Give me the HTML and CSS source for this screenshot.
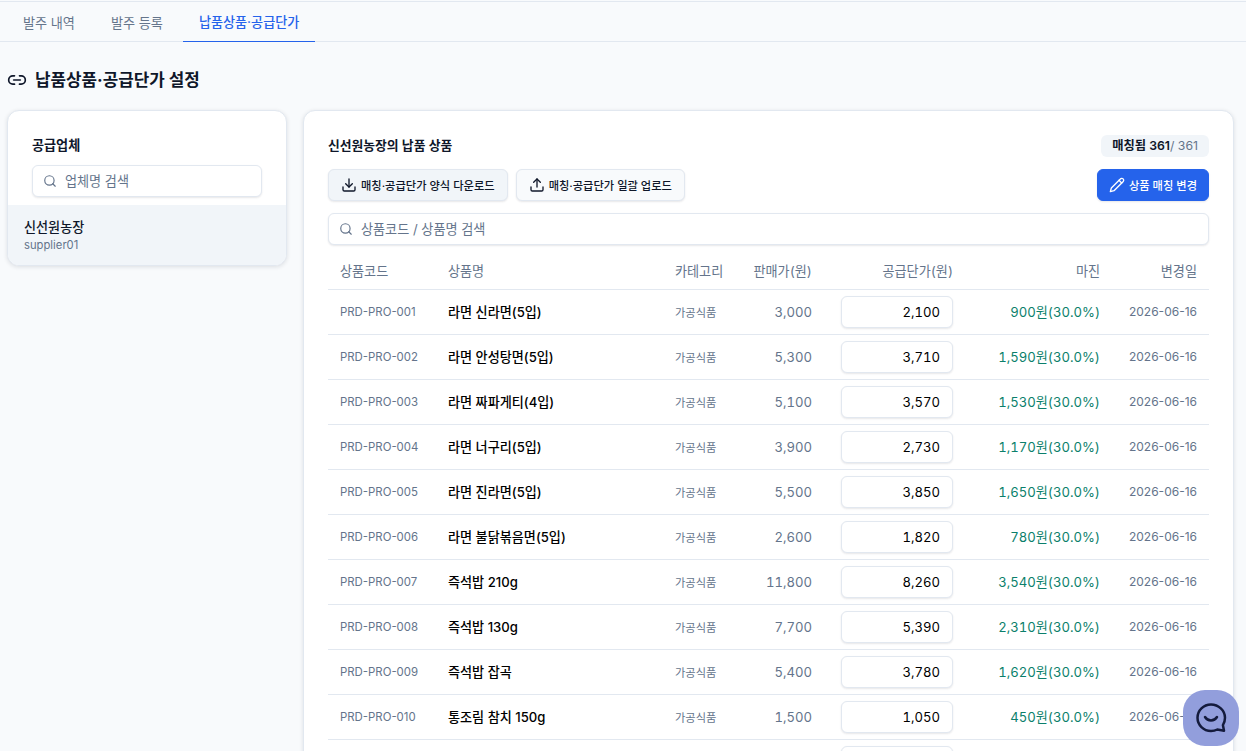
FILE: index.html
```html
<!DOCTYPE html>
<html lang="ko">
  <head>
    <meta charset="UTF-8" />
    <meta name="viewport" content="width=device-width, initial-scale=1.0" />
    <title>납품상품·공급단가 설정</title>
    <link rel="stylesheet" href="styles.css">
  </head>
  <body>
    <nav class="tabs">
      <a class="tab">발주 내역</a>
      <a class="tab">발주 등록</a>
      <a class="tab active">납품상품·공급단가</a>
    </nav>
    <main class="page">
      <h1 class="page-title">
        <svg class="title-icon" viewBox="0 0 24 24" fill="none" stroke="currentColor" stroke-width="2" stroke-linecap="round" stroke-linejoin="round">
          <path d="M9 17H7A5 5 0 0 1 7 7h2" />
          <path d="M15 7h2a5 5 0 1 1 0 10h-2" />
          <line x1="8" y1="12" x2="16" y2="12" />
        </svg>
        납품상품·공급단가 설정
      </h1>
      <div class="layout">
        <aside class="card side-card">
          <div class="side-head">
            <h2 class="side-title">공급업체</h2>
            <div class="search">
              <svg class="search-icon" viewBox="0 0 24 24" fill="none" stroke="currentColor" stroke-width="2" stroke-linecap="round" stroke-linejoin="round"><circle cx="11" cy="11" r="8" /><path d="m21 21-4.3-4.3" /></svg>
              <span class="placeholder">업체명 검색</span>
            </div>
          </div>
          <div class="supplier">
            <div class="supplier-name">신선원농장</div>
            <div class="supplier-id">supplier01</div>
          </div>
        </aside>
        <section class="card main-card">
          <div class="main-head">
            <h2 class="main-title">신선원농장의 납품 상품</h2>
            <span class="count"><b>매칭됨 361</b>/ 361</span>
          </div>
          <div class="actions">
            <button type="button" class="btn btn-hover">
              <svg class="btn-icon" viewBox="0 0 24 24" fill="none" stroke="currentColor" stroke-width="2" stroke-linecap="round" stroke-linejoin="round"><path d="M21 15v4a2 2 0 0 1-2 2H5a2 2 0 0 1-2-2v-4" /><polyline points="7 10 12 15 17 10" /><line x1="12" y1="15" x2="12" y2="3" /></svg>
              매칭·공급단가 양식 다운로드
            </button>
            <button type="button" class="btn">
              <svg class="btn-icon" viewBox="0 0 24 24" fill="none" stroke="currentColor" stroke-width="2" stroke-linecap="round" stroke-linejoin="round"><path d="M21 15v4a2 2 0 0 1-2 2H5a2 2 0 0 1-2-2v-4" /><polyline points="17 8 12 3 7 8" /><line x1="12" y1="3" x2="12" y2="15" /></svg>
              매칭·공급단가 일괄 업로드
            </button>
            <button type="button" class="btn btn-primary">
              <svg class="btn-icon" viewBox="0 0 24 24" fill="none" stroke="currentColor" stroke-width="2" stroke-linecap="round" stroke-linejoin="round"><path d="M17 3a2.85 2.83 0 1 1 4 4L7.5 20.5 2 22l1.5-5.5Z" /><path d="m15 5 4 4" /></svg>
              상품 매칭 변경
            </button>
          </div>
          <div class="search search-wide">
            <svg class="search-icon" viewBox="0 0 24 24" fill="none" stroke="currentColor" stroke-width="2" stroke-linecap="round" stroke-linejoin="round"><circle cx="11" cy="11" r="8" /><path d="m21 21-4.3-4.3" /></svg>
            <span class="placeholder">상품코드 / 상품명 검색</span>
          </div>
          <table class="products">
            <thead>
              <tr>
                <th class="col-code">상품코드</th>
                <th class="col-name">상품명</th>
                <th class="col-cat">카테고리</th>
                <th class="col-sale num">판매가(원)</th>
                <th class="col-supply num">공급단가(원)</th>
                <th class="col-margin num">마진</th>
                <th class="col-date num">변경일</th>
              </tr>
            </thead>
            <tbody>
              <tr><td class="code">PRD-PRO-001</td><td class="name">라면 신라면(5입)</td><td class="cat">가공식품</td><td class="sale num">3,000</td><td class="num"><span class="price">2,100</span></td><td class="margin num">900원(30.0%)</td><td class="date">2026-06-16</td></tr>
              <tr><td class="code">PRD-PRO-002</td><td class="name">라면 안성탕면(5입)</td><td class="cat">가공식품</td><td class="sale num">5,300</td><td class="num"><span class="price">3,710</span></td><td class="margin num">1,590원(30.0%)</td><td class="date">2026-06-16</td></tr>
              <tr><td class="code">PRD-PRO-003</td><td class="name">라면 짜파게티(4입)</td><td class="cat">가공식품</td><td class="sale num">5,100</td><td class="num"><span class="price">3,570</span></td><td class="margin num">1,530원(30.0%)</td><td class="date">2026-06-16</td></tr>
              <tr><td class="code">PRD-PRO-004</td><td class="name">라면 너구리(5입)</td><td class="cat">가공식품</td><td class="sale num">3,900</td><td class="num"><span class="price">2,730</span></td><td class="margin num">1,170원(30.0%)</td><td class="date">2026-06-16</td></tr>
              <tr><td class="code">PRD-PRO-005</td><td class="name">라면 진라면(5입)</td><td class="cat">가공식품</td><td class="sale num">5,500</td><td class="num"><span class="price">3,850</span></td><td class="margin num">1,650원(30.0%)</td><td class="date">2026-06-16</td></tr>
              <tr><td class="code">PRD-PRO-006</td><td class="name">라면 불닭볶음면(5입)</td><td class="cat">가공식품</td><td class="sale num">2,600</td><td class="num"><span class="price">1,820</span></td><td class="margin num">780원(30.0%)</td><td class="date">2026-06-16</td></tr>
              <tr><td class="code">PRD-PRO-007</td><td class="name">즉석밥 210g</td><td class="cat">가공식품</td><td class="sale num">11,800</td><td class="num"><span class="price">8,260</span></td><td class="margin num">3,540원(30.0%)</td><td class="date">2026-06-16</td></tr>
              <tr><td class="code">PRD-PRO-008</td><td class="name">즉석밥 130g</td><td class="cat">가공식품</td><td class="sale num">7,700</td><td class="num"><span class="price">5,390</span></td><td class="margin num">2,310원(30.0%)</td><td class="date">2026-06-16</td></tr>
              <tr><td class="code">PRD-PRO-009</td><td class="name">즉석밥 잡곡</td><td class="cat">가공식품</td><td class="sale num">5,400</td><td class="num"><span class="price">3,780</span></td><td class="margin num">1,620원(30.0%)</td><td class="date">2026-06-16</td></tr>
              <tr><td class="code">PRD-PRO-010</td><td class="name">통조림 참치 150g</td><td class="cat">가공식품</td><td class="sale num">1,500</td><td class="num"><span class="price">1,050</span></td><td class="margin num">450원(30.0%)</td><td class="date">2026-06-16</td></tr>
              <tr><td class="code"></td><td class="name"></td><td class="cat"></td><td class="sale num"></td><td class="num"><span class="price"></span></td><td class="margin num"></td><td class="date"></td></tr>
            </tbody>
          </table>
        </section>
      </div>
    </main>
    <button type="button" class="chat-fab" aria-label="채팅">
      <svg viewBox="0 0 32 32" fill="none" stroke="currentColor" stroke-width="2.500" stroke-linecap="round" stroke-linejoin="round">
        <path d="M16 2.500C8.500 2.500 2.500 8.500 2.500 15.800S8.500 29 16 29c2.200 0 4.400-.5 6.300-1.500l6.700 1.300-1.100-5.700c1.400-2.200 2.100-4.900 2.100-7.300C30 8.500 23.500 2.500 16 2.500Z" />
        <path d="M10 15c1.400 2.300 3.500 3.500 6 3.500s4.600-1.200 6-3.500" />
      </svg>
    </button>
  </body>
</html>
```

FILE: styles.css
```css
* {
  box-sizing: border-box;
}
html,
body {
  height: 100%;
  overflow: hidden;
}
body {
  margin: 0;
  padding-top: 1px;
  background-color: #f8fafc;
  color: #0f172a;
  font-family: Inter, "Noto Sans CJK KR", "Noto Sans", sans-serif;
  font-size: 13.125px;
}
.tabs {
  display: flex;
  height: 41px;
  padding-left: 7px;
  border-top: 1px solid #e2e8f0;
  border-bottom: 1px solid #e2e8f0;
}
.tab {
  display: flex;
  align-items: center;
  height: 40px;
  padding: 0 16px;
  margin-right: 4px;
  color: #64748b;
  font-size: 13.125px;
}
.tab.active {
  color: #2563eb;
  border-bottom: 1px solid #2563eb;
  font-weight: 500;
}
.page {
  padding: 0 12px 0 7px;
}
.page-title {
  display: flex;
  align-items: center;
  gap: 8px;
  height: 28px;
  margin: 24px 0 16px;
  font-size: 16.875px;
  font-weight: 700;
  line-height: 28px;
}
.title-icon {
  width: 20px;
  height: 20px;
}
.layout {
  display: flex;
  gap: 16px;
  align-items: flex-start;
}
.card {
  background-color: #fff;
  border: 1px solid #e2e8f0;
  border-radius: 12px;
  box-shadow: 0 1px 4px rgba(15, 23, 42, 0.12);
}
.side-card {
  width: 280px;
  flex-shrink: 0;
  overflow: hidden;
}
.side-head {
  padding: 24px 24px 8px;
}
.side-title {
  margin: 0 0 10px;
  font-size: 13.125px;
  font-weight: 600;
  line-height: 20px;
}
.search {
  display: flex;
  align-items: center;
  gap: 8px;
  height: 32px;
  padding: 0 10px;
  background-color: #fff;
  border: 1px solid #e2e8f0;
  border-radius: 6px;
  box-shadow: 0 1px 2px rgba(15, 23, 42, 0.1);
}
.search-icon {
  width: 14px;
  height: 14px;
  color: #64748b;
}
.placeholder {
  color: #64748b;
  font-size: 13.125px;
  line-height: 30px;
}
.supplier {
  height: 60px;
  padding: 13px 16px;
  background-color: #f1f5f9;
}
.supplier-name {
  font-size: 13.125px;
  font-weight: 500;
  line-height: 18px;
}
.supplier-id {
  color: #64748b;
  font-size: 11.25px;
  line-height: 18px;
}
.main-card {
  flex: 1;
  padding: 24px 24px 0;
}
.main-head {
  display: flex;
  justify-content: space-between;
  align-items: flex-start;
  height: 22px;
}
.main-title {
  margin: 0;
  font-size: 12.800px;
  font-weight: 600;
  line-height: 22px;
}
.count {
  padding: 0 11px;
  background-color: #f1f5f9;
  border-radius: 6px;
  color: #64748b;
  font-size: 12.250px;
  line-height: 22px;
}
.count b {
  color: #0f172a;
  font-weight: 600;
}
.actions {
  display: flex;
  gap: 8px;
  margin-top: 12px;
}
.btn {
  display: inline-flex;
  align-items: center;
  gap: 4px;
  height: 32px;
  padding: 0 12px;
  background-color: #f8fafc;
  border: 1px solid #e2e8f0;
  border-radius: 6px;
  box-shadow: 0 1px 2px rgba(15, 23, 42, 0.1);
  color: #0f172a;
  font-family: inherit;
  font-size: 11.250px;
  font-weight: 500;
}
.btn-hover {
  background-color: #f1f5f9;
}
.btn-icon {
  width: 16px;
  height: 16px;
}
.btn-primary {
  margin-left: auto;
  padding: 0 11px;
  background-color: #2563eb;
  border-color: #2563eb;
  color: #fff;
}
.search-wide {
  margin-top: 12px;
}
.products {
  width: 100%;
  margin-top: 8px;
  border-collapse: collapse;
  table-layout: fixed;
}
.products th {
  height: 36px;
  padding: 0 12px;
  border-bottom: 1px solid #e2e8f0;
  color: #64748b;
  font-size: 13.125px;
  font-weight: 400;
  text-align: left;
}
.products td {
  height: 45px;
  padding: 0 12px;
  border-bottom: 1px solid #e2e8f0;
  white-space: nowrap;
}
.products th.num,
.products td.num {
  text-align: right;
  font-variant-numeric: tabular-nums;
}
.col-code {
  width: 108px;
}
.col-cat {
  width: 73px;
}
.col-sale {
  width: 88px;
}
.col-supply {
  width: 141px;
}
.col-margin {
  width: 147px;
}
.col-date {
  width: 97px;
}
.code {
  color: #64748b;
  font-size: 11.400px;
}
.products td.date {
  color: #64748b;
  font-size: 12px;
  text-align: right;
}
.name {
  color: #000;
  font-size: 13.125px;
  font-weight: 500;
}
.cat {
  color: #64748b;
  font-size: 11.250px;
}
.sale {
  color: #64748b;
}
.price {
  display: block;
  width: 112px;
  height: 32px;
  margin-left: auto;
  padding: 0 12px;
  background-color: #fff;
  border: 1px solid #e2e8f0;
  border-radius: 6px;
  box-shadow: 0 1px 2px rgba(15, 23, 42, 0.1);
  color: #000;
  line-height: 30px;
}
.margin {
  color: #0b7f6b;
}
.chat-fab {
  position: fixed;
  top: 690px;
  left: 1183px;
  display: flex;
  align-items: center;
  justify-content: center;
  width: 56px;
  height: 56px;
  padding: 0;
  border: none;
  border-radius: 22px;
  background-color: #929edc;
  color: #141b3d;
}
.chat-fab svg {
  width: 32px;
  height: 32px;
}
```
